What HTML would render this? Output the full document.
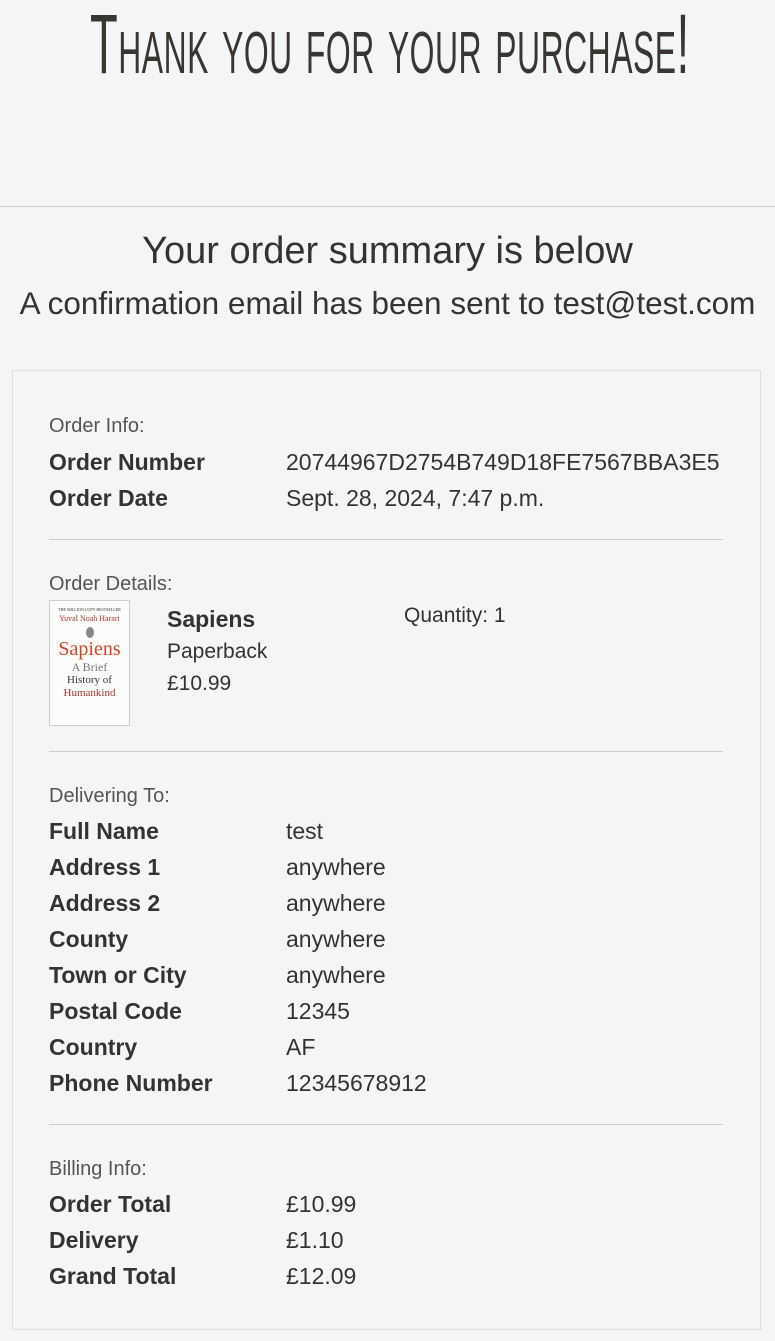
<!DOCTYPE html>
<html><head><meta charset="utf-8"><style>
body{margin:0;background:#f4f6f6;color:#333;font-family:"Liberation Sans","DejaVu Sans",sans-serif;width:775px;height:1341px;overflow:hidden;position:relative}
.t{position:absolute;top:-4px;left:90px;font-size:84px;font-variant:small-caps;letter-spacing:1px;color:#383632;transform:scaleX(0.54);transform-origin:0 0;white-space:nowrap;font-family:"Liberation Sans Narrow","Liberation Sans",sans-serif}
.hr0{position:absolute;top:206px;left:0;width:775px;border-top:1px solid #ccc}
.h2{position:absolute;top:230px;width:775px;text-align:center;font-size:38px;white-space:nowrap}
.h3{position:absolute;top:285px;width:775px;text-align:center;font-size:31.5px;white-space:nowrap}
.card{position:absolute;left:12px;top:370px;width:747px;height:958px;border:1px solid #ddd}
.a{position:absolute;font-size:23px;white-space:nowrap}
.b{font-weight:bold}
.s{font-size:20px;color:#555}
.ln{position:absolute;left:49px;width:674px;border-top:1px solid #ccc}
.book{position:absolute;left:49px;top:600px;width:81px;height:126px;border:1px solid #ccc;background:#fcfcfa;font-family:"Liberation Serif",serif;text-align:center;box-sizing:border-box}
</style></head><body>
<div class="t">Thank you for your purchase!</div>
<div class="hr0"></div>
<div class="h2">Your order summary is below</div>
<div class="h3">A confirmation email has been sent to test@test.com</div>
<div class="card"></div>
<div class="a s" style="left:49px;top:415px">Order Info:</div>
<div class="a b" style="left:49px;top:449px">Order Number</div><div class="a" style="left:286px;top:449px">20744967D2754B749D18FE7567BBA3E5</div>
<div class="a b" style="left:49px;top:485px">Order Date</div><div class="a" style="left:286px;top:485px">Sept. 28, 2024, 7:47 p.m.</div>
<div class="ln" style="top:539px"></div>
<div class="a s" style="left:49px;top:573px">Order Details:</div>
<div class="book"><div style="font-size:4px;margin-top:6px">THE MILLION COPY BESTSELLER</div><div style="font-size:8px;color:#a33;margin-top:2px">Yuval Noah Harari</div><div style="width:8px;height:11px;border-radius:50%;background:#888;margin:4px auto 0"></div><div style="font-size:20px;color:#d0452a;line-height:22px">Sapiens</div><div style="font-size:12px;color:#777;line-height:14px">A Brief</div><div style="font-size:11px;line-height:13px">History of</div><div style="font-size:11px;color:#a33;line-height:13px">Humankind</div></div>
<div class="a b" style="left:167px;top:606px">Sapiens</div>
<div class="a" style="left:167px;top:640px;font-size:21px">Paperback</div>
<div class="a" style="left:167px;top:672px;font-size:21px">£10.99</div>
<div class="a" style="left:404px;top:604px;font-size:21px">Quantity: 1</div>
<div class="ln" style="top:751px"></div>
<div class="a s" style="left:49px;top:785px">Delivering To:</div>
<div class="a b" style="left:49px;top:818px">Full Name</div><div class="a" style="left:286px;top:818px">test</div>
<div class="a b" style="left:49px;top:854px">Address 1</div><div class="a" style="left:286px;top:854px">anywhere</div>
<div class="a b" style="left:49px;top:890px">Address 2</div><div class="a" style="left:286px;top:890px">anywhere</div>
<div class="a b" style="left:49px;top:926px">County</div><div class="a" style="left:286px;top:926px">anywhere</div>
<div class="a b" style="left:49px;top:962px">Town or City</div><div class="a" style="left:286px;top:962px">anywhere</div>
<div class="a b" style="left:49px;top:998px">Postal Code</div><div class="a" style="left:286px;top:998px">12345</div>
<div class="a b" style="left:49px;top:1034px">Country</div><div class="a" style="left:286px;top:1034px">AF</div>
<div class="a b" style="left:49px;top:1070px">Phone Number</div><div class="a" style="left:286px;top:1070px">12345678912</div>
<div class="ln" style="top:1124px"></div>
<div class="a s" style="left:49px;top:1158px">Billing Info:</div>
<div class="a b" style="left:49px;top:1191px">Order Total</div><div class="a" style="left:286px;top:1191px">£10.99</div>
<div class="a b" style="left:49px;top:1227px">Delivery</div><div class="a" style="left:286px;top:1227px">£1.10</div>
<div class="a b" style="left:49px;top:1263px">Grand Total</div><div class="a" style="left:286px;top:1263px">£12.09</div>
</body></html>
